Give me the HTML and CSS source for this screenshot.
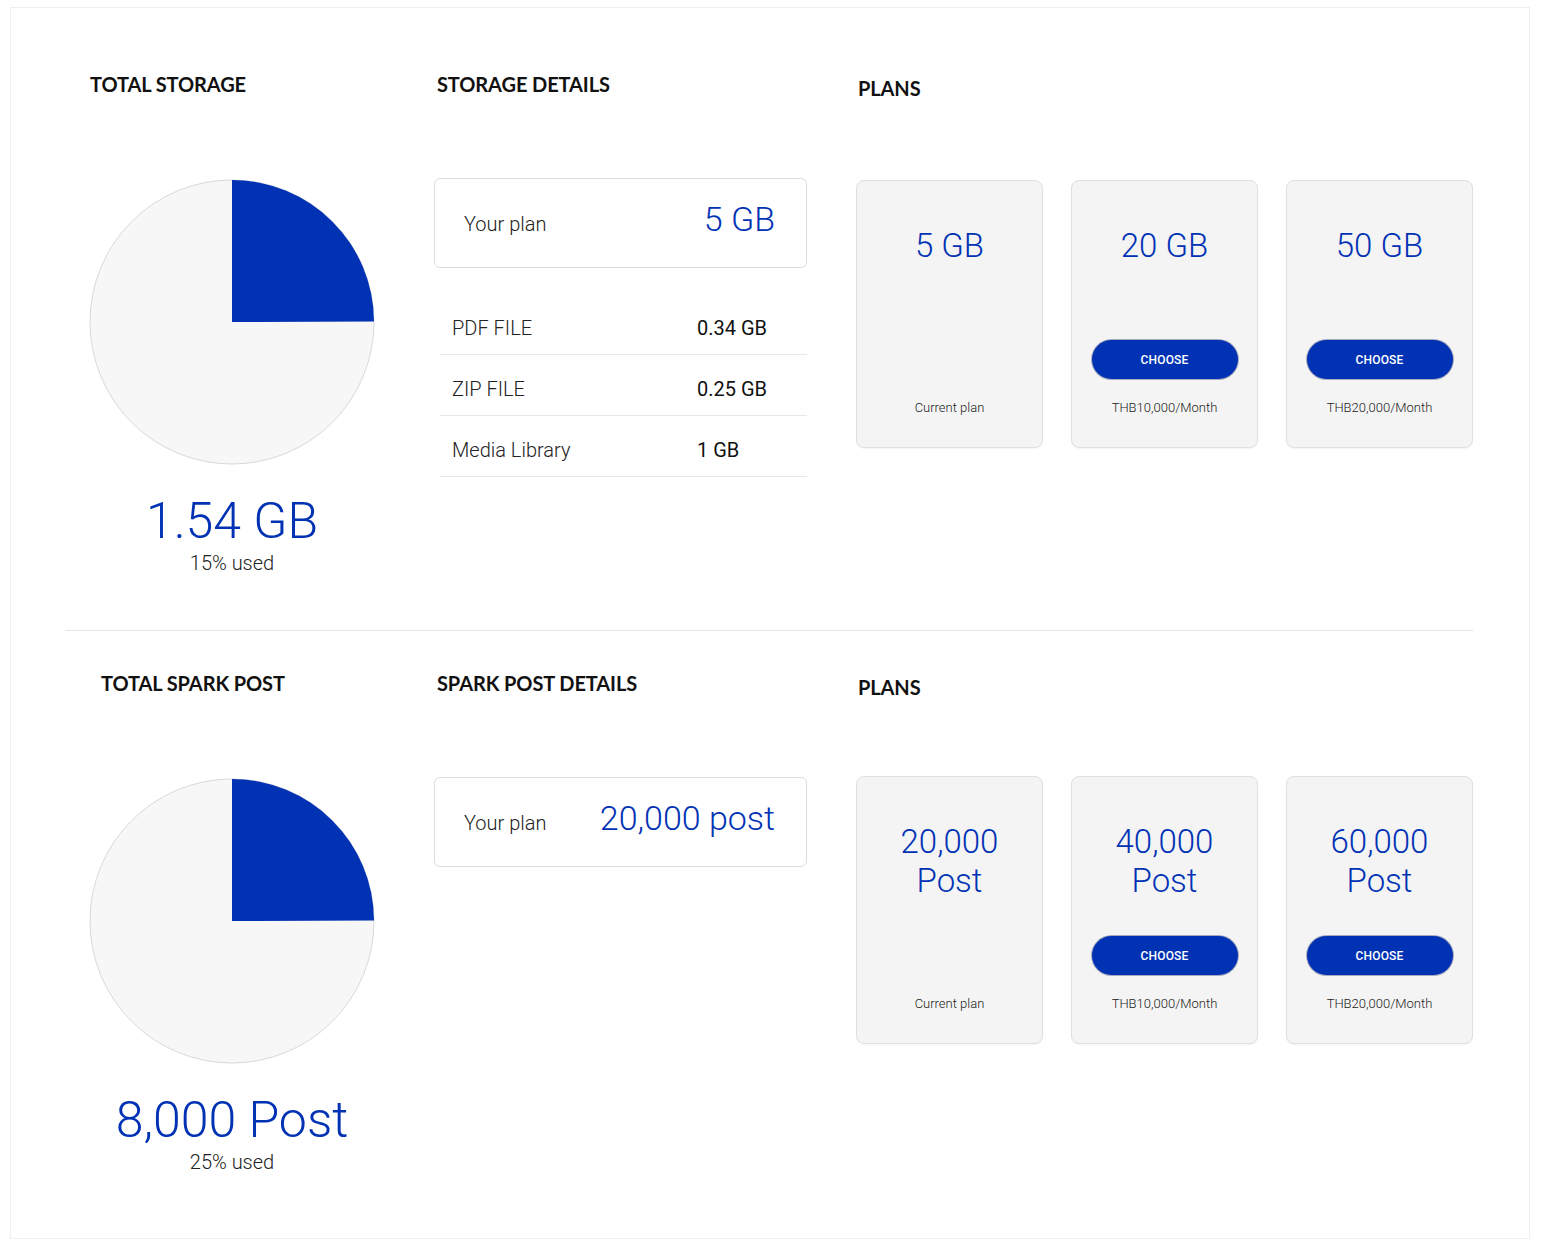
FILE: index.html
```html
<!DOCTYPE html>
<html lang="en">
<head>
<meta charset="utf-8">
<title>Storage</title>
<link rel="stylesheet" href="styles.css">
</head>
<body>
<div class="panel">
  <section class="section section--first">
    <div class="col col-chart">
      <h2 class="heading">TOTAL STORAGE</h2>
      <svg class="pie" width="286" height="286" viewBox="0 0 286 286">
        <circle cx="143" cy="143" r="142" fill="#f7f7f7" stroke="#d9d9d9" stroke-width="1"/>
        <path d="M143 143 L143 1 A142 142 0 0 1 285 142.5 Z" fill="#0232b4"/>
      </svg>
      <div class="total">1.54 GB</div>
      <div class="used">15% used</div>
    </div>
    <div class="col col-details">
      <h2 class="heading heading--details">STORAGE DETAILS</h2>
      <div class="plan-box">
        <span class="plan-label">Your plan</span>
        <span class="plan-value">5 GB</span>
      </div>
      <ul class="breakdown">
        <li class="row"><span class="row-label">PDF FILE</span><span class="row-value">0.34 GB</span></li>
        <li class="row"><span class="row-label">ZIP FILE</span><span class="row-value">0.25 GB</span></li>
        <li class="row"><span class="row-label">Media Library</span><span class="row-value">1 GB</span></li>
      </ul>
    </div>
    <div class="col col-plans">
      <h2 class="heading heading--plans">PLANS</h2>
      <div class="cards">
        <div class="card">
          <div class="card-title">5 GB</div>
          <div class="card-foot"><span class="card-note">Current plan</span></div>
        </div>
        <div class="card">
          <div class="card-title">20 GB</div>
          <div class="card-foot"><button class="choose">CHOOSE</button><span class="card-note">THB10,000/Month</span></div>
        </div>
        <div class="card">
          <div class="card-title">50 GB</div>
          <div class="card-foot"><button class="choose">CHOOSE</button><span class="card-note">THB20,000/Month</span></div>
        </div>
      </div>
    </div>
  </section>

  <hr class="divider">

  <section class="section section--second">
    <div class="col col-chart">
      <h2 class="heading heading--spark">TOTAL SPARK POST</h2>
      <svg class="pie" width="286" height="286" viewBox="0 0 286 286">
        <circle cx="143" cy="143" r="142" fill="#f7f7f7" stroke="#d9d9d9" stroke-width="1"/>
        <path d="M143 143 L143 1 A142 142 0 0 1 285 142.5 Z" fill="#0232b4"/>
      </svg>
      <div class="total">8,000 Post</div>
      <div class="used">25% used</div>
    </div>
    <div class="col col-details">
      <h2 class="heading heading--details">SPARK POST DETAILS</h2>
      <div class="plan-box">
        <span class="plan-label">Your plan</span>
        <span class="plan-value">20,000 post</span>
      </div>
    </div>
    <div class="col col-plans">
      <h2 class="heading heading--plans">PLANS</h2>
      <div class="cards">
        <div class="card">
          <div class="card-title">20,000<br>Post</div>
          <div class="card-foot"><span class="card-note">Current plan</span></div>
        </div>
        <div class="card">
          <div class="card-title">40,000<br>Post</div>
          <div class="card-foot"><button class="choose">CHOOSE</button><span class="card-note">THB10,000/Month</span></div>
        </div>
        <div class="card">
          <div class="card-title">60,000<br>Post</div>
          <div class="card-foot"><button class="choose">CHOOSE</button><span class="card-note">THB20,000/Month</span></div>
        </div>
      </div>
    </div>
  </section>
</div>
</body>
</html>
```

FILE: styles.css
```css
* { box-sizing: border-box; }

html, body { background: #ffffff; }

body {
  margin: 7px 11px 7px 10px;
  font-family: Roboto, "Liberation Sans", Arial, sans-serif;
  color: #222;
}

.panel {
  width: 1520px;
  height: 1232px;
  border: 1px solid #efefef;
  background: #fff;
}

.section {
  display: flex;
  align-items: flex-start;
  padding-left: 78px;
}

.section--first { padding-top: 64px; padding-bottom: 55px; }
.section--second { padding-top: 40px; }

.col { display: flex; flex-direction: column; }

.col-chart { width: 286px; align-items: center; }
.col-details { width: 373px; margin-left: 59px; }
.col-plans { width: 617px; margin-left: 49px; }

.heading {
  margin: 0 0 79px 0;
  height: 28px;
  font-family: Lato, "Open Sans", sans-serif;
  font-weight: 700;
  font-size: 20px;
  line-height: 24px;
  letter-spacing: -0.1px;
  color: #111;
  align-self: flex-start;
  padding-left: 1px;
}

.heading--spark { padding-left: 12px; }
.heading--details { padding-left: 3px; }
.heading--plans { padding-top: 4px; padding-left: 2px; }

.pie { display: block; }

.total {
  margin-top: 28px;
  font-size: 50px;
  line-height: 56px;
  font-weight: 300;
  color: #0232b4;
  white-space: nowrap;
}

.used {
  margin-top: 2px;
  font-size: 20px;
  line-height: 24px;
  font-weight: 300;
  color: #222;
}

.plan-box {
  margin-top: -1px;
  height: 90px;
  border: 1px solid #dcdcdc;
  border-radius: 6px;
  display: flex;
  align-items: baseline;
  justify-content: space-between;
  padding: 20px 31px 28px 29px;
}

.plan-label {
  font-size: 20px;
  font-weight: 300;
  color: #222;
}

.plan-value {
  font-size: 34px;
  line-height: 40px;
  font-weight: 300;
  color: #0232b4;
}

.breakdown {
  list-style: none;
  margin: 26px 0 0 6px;
  padding: 0;
}

.row {
  display: grid;
  grid-template-columns: 245px 1fr;
  padding: 22px 12px 14px 12px;
  line-height: 24px;
  font-size: 20px;
  border-bottom: 1px solid #e8e8e8;
}

.row-label { font-weight: 300; color: #222; }
.row-value { font-weight: 400; color: #111; }

.cards {
  display: flex;
  gap: 28px;
}

.section--first .cards { margin-top: 1px; }
.section--second .cards { margin-top: -2px; }

.card {
  width: 187px;
  height: 268px;
  background: #f4f4f4;
  border: 1px solid #e0e0e0;
  border-radius: 8px;
  box-shadow: 0 1px 1px rgba(0,0,0,0.04);
  display: flex;
  flex-direction: column;
  align-items: center;
  padding: 45px 0 31px 0;
}

.card-title {
  font-size: 33px;
  line-height: 39px;
  font-weight: 300;
  color: #0232b4;
  text-align: center;
}

.card-foot {
  margin-top: auto;
  display: flex;
  flex-direction: column;
  align-items: center;
}

.choose {
  width: 146px;
  height: 39px;
  border: none;
  border-radius: 20px;
  background: #0232b4;
  box-shadow: 0 0 0 1px rgba(70,80,120,0.45);
  color: #fff;
  font-family: Roboto, "Liberation Sans", Arial, sans-serif;
  font-weight: 500;
  font-size: 12px;
  letter-spacing: 0.2px;
  margin-bottom: 21px;
  padding: 0;
}

.card-note {
  font-size: 13px;
  line-height: 16px;
  font-weight: 300;
  color: #222;
}

.divider {
  margin: 0 56px 0 54px;
  border: none;
  border-top: 1px solid #e4e4e4;
  height: 0;
}
```
